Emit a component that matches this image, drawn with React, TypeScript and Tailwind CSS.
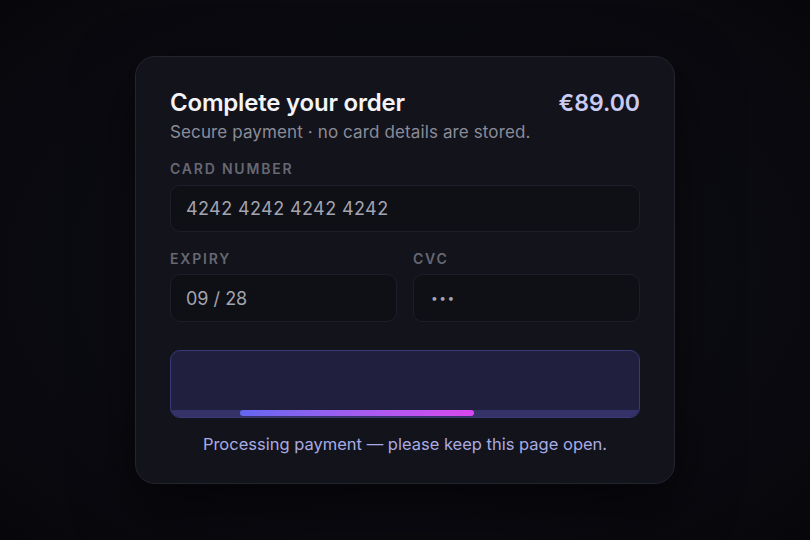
import React from "react";

export default function App() {
  return (
    <div
      className="w-[810px] h-[540px] flex items-center justify-center bg-[#0a0a10]"
      style={{ fontFamily: "Inter, 'Noto Sans', sans-serif", backgroundImage: "radial-gradient(ellipse at center, #12121b 0%, #0b0b12 55%, #07070b 100%)" }}
    >
      <div className="w-[540px] h-[428px] rounded-[20px] border border-[#24242f] bg-[#13131b] px-[34px] pt-[32px] shadow-[0_20px_60px_rgba(0,0,0,0.6)]">
        <div className="flex items-center justify-between h-[28px]">
          <h1 className="text-[24px] font-semibold text-[#f4f4f8] tracking-[-0.2px]">Complete your order</h1>
          <span className="text-[23px] font-semibold text-[#c9cbf3]">€89.00</span>
        </div>
        <p className="mt-[4px] text-[17px] leading-[22px] tracking-[0.12px] text-[#8a8c98]">Secure payment · no card details are stored.</p>

        <div className="mt-[16px] text-[14px] leading-[20px] font-semibold tracking-[1.8px] text-[#666874]">CARD NUMBER</div>
        <div className="mt-[6px] h-[47px] rounded-[10px] border border-[#1d1e28] bg-[#0f0f16] flex items-center px-[15px] text-[18px] text-[#a2a4b0] tracking-[0.4px]">
          4242 4242 4242 4242
        </div>

        <div className="mt-[17px] grid grid-cols-2 gap-[16px]">
          <div>
            <div className="text-[14px] leading-[20px] font-semibold tracking-[1.8px] text-[#666874]">EXPIRY</div>
            <div className="mt-[5px] h-[48px] rounded-[10px] border border-[#1d1e28] bg-[#0f0f16] flex items-center px-[15px] text-[18px] text-[#a2a4b0]">
              09 / 28
            </div>
          </div>
          <div>
            <div className="text-[14px] leading-[20px] font-semibold tracking-[1.8px] text-[#666874]">CVC</div>
            <div className="mt-[5px] h-[48px] rounded-[10px] border border-[#1d1e28] bg-[#0f0f16] flex items-center px-[17px] text-[12px] text-[#a2a4b0] tracking-[1.5px]">
              •••
            </div>
          </div>
        </div>

        <div className="mt-[28px] h-[68px] rounded-[10px] border border-[#3a3977] bg-[#211f3e] overflow-hidden flex flex-col justify-end">
          <div className="h-[7px] bg-[#35326a] relative">
            <div className="absolute left-[69px] top-0 h-[6px] w-[234px] rounded-full bg-gradient-to-r from-[#6366f1] to-[#d946ef]" />
          </div>
        </div>

        <p className="mt-[16px] text-center text-[16.5px] leading-[20px] text-[#a9abe3]">
          Processing payment — please keep this page open.
        </p>
      </div>
    </div>
  );
}
